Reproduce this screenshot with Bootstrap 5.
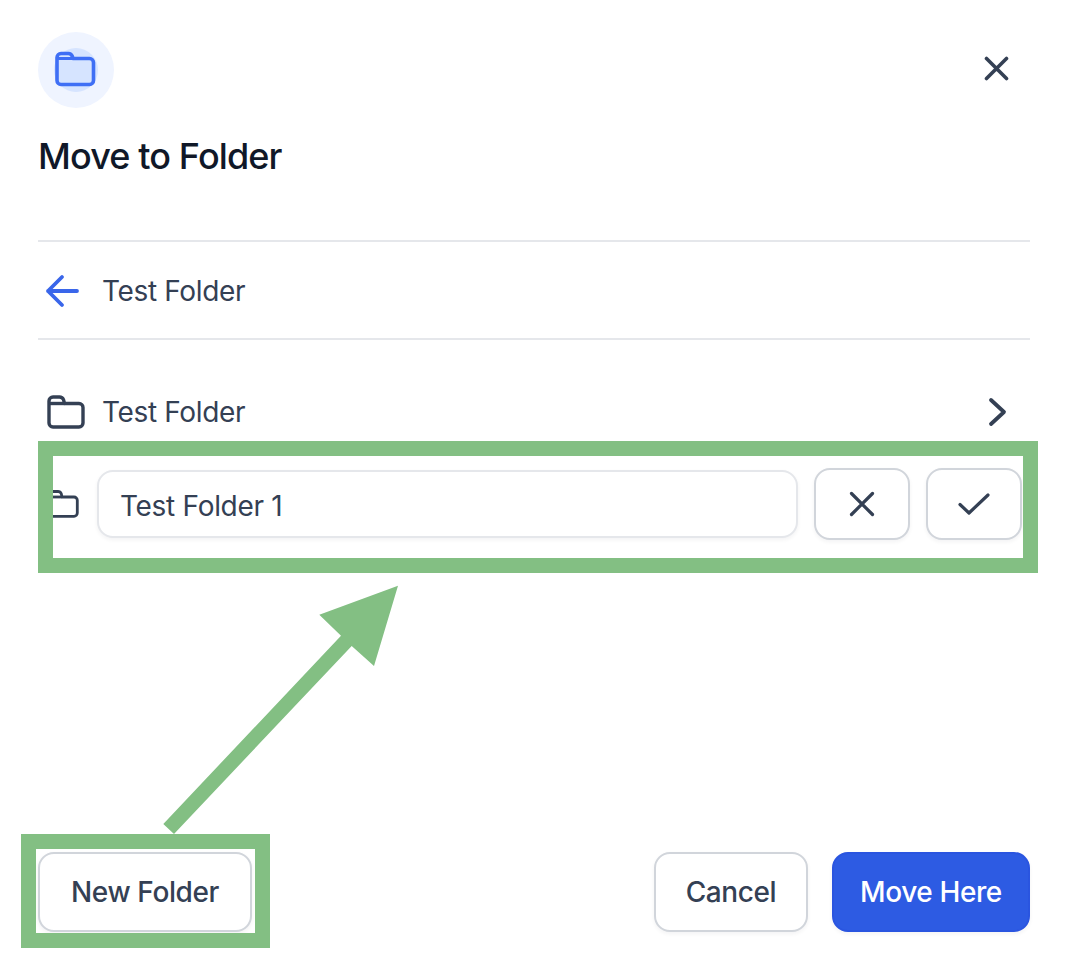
<!DOCTYPE html>
<html lang="en">
<head>
<meta charset="utf-8">
<title>Move to Folder</title>
<link href="https://cdn.jsdelivr.net/npm/bootstrap@5.3.0/dist/css/bootstrap.min.css" rel="stylesheet">
<style>
html,body{height:100%;margin:0;background:#fff;}
body{font-family:Inter,"Liberation Sans",sans-serif;color:#344054;overflow:hidden;}
.dlg{height:964px;width:1066px;padding:32px 36px 32px 38px;}
.hdr-row{height:76px;}
.round-ico{width:76px;height:76px;border-radius:50%;background:#eff4ff;}
.close-x{margin-right:21px;margin-top:-4px;line-height:0;color:#344054;}
.ttl{font-size:36px;line-height:44px;font-weight:500;color:#101828;margin:26px 0 0;letter-spacing:-.88px;}
.sep{height:2px;background:#e5e7eb;border:0;opacity:1;margin:0;}
.sep-a{margin-top:62px;}
.back-row{height:96px;padding-top:2px;font-size:28px;color:#344054;letter-spacing:-.36px;}
.back-ico{width:64px;padding-left:7px;line-height:0;}
.tree{margin-top:40px;}
.item-row{height:64px;font-size:28px;color:#344054;padding-right:22px;letter-spacing:-.36px;}
.item-ico{width:64px;padding-left:9px;line-height:0;}
.edit-row{height:72px;margin-top:24px;padding-right:8px;gap:16px;}
.edit-ico{width:59px;flex:none;margin-right:-16px;padding-left:9px;line-height:0;}
.name-input.form-control{flex:1;height:68px;border:2px solid #e5e7eb;border-radius:16px;font-size:28px;color:#344054;padding:3px 22px 0 21px;letter-spacing:-.3px;box-shadow:0 2px 4px rgba(16,24,40,.05);}
.act-btn.btn{width:96px;height:72px;padding:0;border:2px solid #d1d5db;border-radius:16px;background:#fff;line-height:0;box-shadow:0 2px 4px rgba(16,24,40,.05);}
.foot-btn.btn{height:80px;font-size:28px;font-weight:500;letter-spacing:-.4px;border-radius:16px;border:2px solid #d1d5db;background:#fff;color:#344054;box-shadow:0 2px 4px rgba(16,24,40,.05);padding:0;}
.w-new{width:214px;}
.w-cancel{width:154px;}
.w-move{width:198px;}
.foot-btn.btn.go{background:#2d5be3;border-color:#2a55e0;color:#fff;}
.mark-box{position:absolute;border:15px solid #83bf83;pointer-events:none;}
.mark-a{left:38px;top:441px;width:1000px;height:132px;}
.mark-b{left:21px;top:834px;width:249px;height:114px;}
.mark-arrow{position:absolute;left:0;top:0;pointer-events:none;}
</style>
</head>
<body>
<div class="dlg d-flex flex-column position-relative">
  <div class="hdr-row d-flex justify-content-between align-items-center">
    <div class="round-ico d-flex align-items-center justify-content-center">
      <svg width="44" height="44" viewBox="0 0 44 44" fill="none"><circle cx="22" cy="22" r="22" fill="#d1e0ff" opacity=".85"/><path d="M3 9.5C3 7.3 4.8 5.5 7 5.5H14.5C16.6 5.5 17.6 6.5 18.3 8.2L19 10.5H35.5C37.7 10.5 39.5 12.3 39.5 14.5V32.5C39.5 34.7 37.7 36.5 35.5 36.5H7C4.8 36.5 3 34.7 3 32.5Z" stroke="#3f6ff5" stroke-width="3.6" stroke-linejoin="round"/><path d="M3.5 10.5H19" stroke="#3f6ff5" stroke-width="3"/></svg>
    </div>
    <button type="button" class="btn p-0 border-0 close-x" aria-label="Close">
      <svg width="25" height="25" viewBox="0 0 25 25" fill="none" stroke="#344054" stroke-width="3.6" stroke-linecap="round"><path d="M2.5 2.5L22.5 22.5M22.5 2.5L2.5 22.5"/></svg>
    </button>
  </div>
  <h5 class="ttl">Move to Folder</h5>
  <hr class="sep sep-a">
  <div class="back-row d-flex align-items-center">
    <span class="back-ico"><svg width="36" height="34" viewBox="0 0 36 34" fill="none" stroke="#3a66ea" stroke-width="3.8" stroke-linecap="round" stroke-linejoin="round"><path d="M32 17H3M17 3L3 17L17 31"/></svg></span>
    <span>Test Folder</span>
  </div>
  <hr class="sep">
  <div class="tree">
    <div class="item-row d-flex align-items-center">
      <span class="item-ico"><svg width="38" height="34" viewBox="0 0 38 34" fill="none" stroke="#344054" stroke-width="3.4" stroke-linejoin="round"><path d="M2 6C2 3.8 3.8 2 6 2H12.5C14.7 2 15.8 3 16.5 4.6L17.5 8.5H32C34.2 8.5 36 10.3 36 12.5V28C36 30.2 34.2 32 32 32H6C3.8 32 2 30.2 2 28Z"/><path d="M2 8.5H17.5"/></svg></span>
      <span class="flex-grow-1">Test Folder</span>
      <svg width="20" height="30" viewBox="0 0 20 30" fill="none" stroke="#344054" stroke-width="3.8" stroke-linecap="round" stroke-linejoin="round"><path d="M3 3L16 15L3 27"/></svg>
    </div>
    <div class="edit-row d-flex align-items-center">
      <span class="edit-ico"><svg width="32" height="28" viewBox="0 0 32 28" fill="none" stroke="#344054" stroke-width="2.8" stroke-linejoin="round"><path d="M2 5C2 3 3.5 1.5 5.5 1.5H11C12.8 1.5 13.7 2.4 14.3 3.8L15 7H27C28.8 7 30.3 8.5 30.3 10.3V23C30.3 24.8 28.8 26.3 27 26.3H5.5C3.5 26.3 2 24.8 2 23Z"/><path d="M2 7H15"/></svg></span>
      <input type="text" class="form-control name-input" value="Test Folder 1" aria-label="Folder name">
      <button type="button" class="btn act-btn" aria-label="Cancel"><svg width="26" height="26" viewBox="0 0 26 26" fill="none" stroke="#344054" stroke-width="3.2" stroke-linecap="round"><path d="M2.5 2.5L23.5 23.5M23.5 2.5L2.5 23.5"/></svg></button>
      <button type="button" class="btn act-btn" aria-label="Confirm"><svg width="32" height="24" viewBox="0 0 32 24" fill="none" stroke="#344054" stroke-width="3.2" stroke-linecap="round" stroke-linejoin="round"><path d="M2 12.5L11 21L30 3"/></svg></button>
    </div>
  </div>
  <div class="mt-auto d-flex align-items-center">
    <button type="button" class="btn foot-btn w-new">New Folder</button>
    <div class="ms-auto d-flex gap-4">
      <button type="button" class="btn foot-btn w-cancel">Cancel</button>
      <button type="button" class="btn foot-btn go w-move">Move Here</button>
    </div>
  </div>
  <div class="mark-box mark-a"></div>
  <div class="mark-box mark-b"></div>
  <svg class="mark-arrow" width="1066" height="964" viewBox="0 0 1066 964"><polygon fill="#83bf83" points="163.3,824 341,635.7 319.3,614.7 398,585.7 374,666 351.7,646 174,834"/></svg>
</div>
<script src="https://cdn.jsdelivr.net/npm/bootstrap@5.3.0/dist/js/bootstrap.bundle.min.js"></script>
</body>
</html>
